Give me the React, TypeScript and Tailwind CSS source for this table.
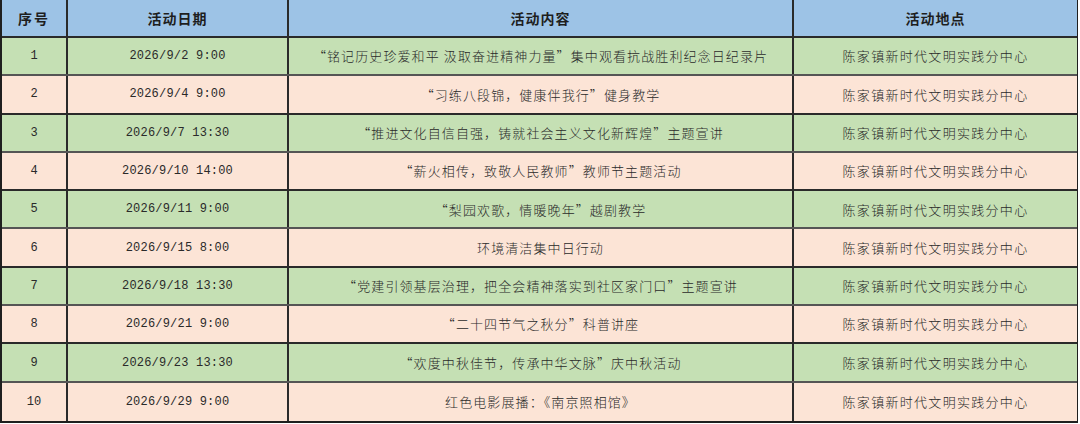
import React from "react";

const rows: [string, string, string][] = [
  ["1", "2026/9/2 9:00", "“铭记历史珍爱和平 汲取奋进精神力量”集中观看抗战胜利纪念日纪录片"],
  ["2", "2026/9/4 9:00", "“习练八段锦，健康伴我行”健身教学"],
  ["3", "2026/9/7 13:30", "“推进文化自信自强，铸就社会主义文化新辉煌”主题宣讲"],
  ["4", "2026/9/10 14:00", "“薪火相传，致敬人民教师”教师节主题活动"],
  ["5", "2026/9/11 9:00", "“梨园欢歌，情暖晚年”越剧教学"],
  ["6", "2026/9/15 8:00", "环境清洁集中日行动"],
  ["7", "2026/9/18 13:30", "“党建引领基层治理，把全会精神落实到社区家门口”主题宣讲"],
  ["8", "2026/9/21 9:00", "“二十四节气之秋分”科普讲座"],
  ["9", "2026/9/23 13:30", "“欢度中秋佳节，传承中华文脉”庆中秋活动"],
  ["10", "2026/9/29 9:00", "红色电影展播：《南京照相馆》"],
];

const cjk = "font-['Noto_Sans_CJK_SC',sans-serif]";
const mono = "font-['Liberation_Mono','Noto_Sans_CJK_SC',monospace]";

export default function App() {
  return (
    <div className="w-[1080px] h-[424px] bg-white">
      <div className="w-[1078px] border-l-2 border-r border-b-2 border-[#1f1f1f] text-[#1e1e1e]">
        <div className="flex h-[38px] bg-[#9dc3e6] border-b-2 border-[#2a2a2a]">
          <div className={`w-[66px] border-r-2 border-[#2a2a2a] flex items-center justify-center text-[14px] font-bold tracking-[2px] ${cjk}`}>序号</div>
          <div className={`w-[221px] border-r-2 border-[#2a2a2a] flex items-center justify-center text-[14px] font-bold tracking-[1px] ${cjk}`}>活动日期</div>
          <div className={`w-[505px] border-r-2 border-[#2a2a2a] flex items-center justify-center text-[14px] font-bold tracking-[1px] ${cjk}`}>活动内容</div>
          <div className={`flex-1 flex items-center justify-center text-[14px] font-bold tracking-[1px] ${cjk}`}>活动地点</div>
        </div>
        {rows.map((r, i) => (
          <div
            key={i}
            className={`flex h-[38.3px] ${i % 2 === 0 ? "bg-[#c5e0b4]" : "bg-[#fce4d6]"} ${i < rows.length - 1 ? (i % 2 === 0 ? "border-b-2 border-[#555]" : "border-b-2 border-[#2a2a2a]") : ""}`}
          >
            <div className={`w-[66px] border-r-2 border-[#2a2a2a] flex items-center justify-center text-[12px] text-[#2a2a2a] ${mono}`}>{r[0]}</div>
            <div className={`w-[221px] border-r-2 border-[#2a2a2a] flex items-center justify-center text-[12px] tracking-[0.2px] text-[#2a2a2a] ${mono}`}>{r[1]}</div>
            <div className={`w-[505px] border-r-2 border-[#2a2a2a] flex items-center justify-center text-[13px] font-light tracking-[1.1px] text-[#2a2a2a] ${cjk}`}>{r[2]}</div>
            <div className={`flex-1 flex items-center justify-center text-[13px] font-light tracking-[1.3px] text-[#2a2a2a] ${cjk}`}>陈家镇新时代文明实践分中心</div>
          </div>
        ))}
      </div>
    </div>
  );
}
